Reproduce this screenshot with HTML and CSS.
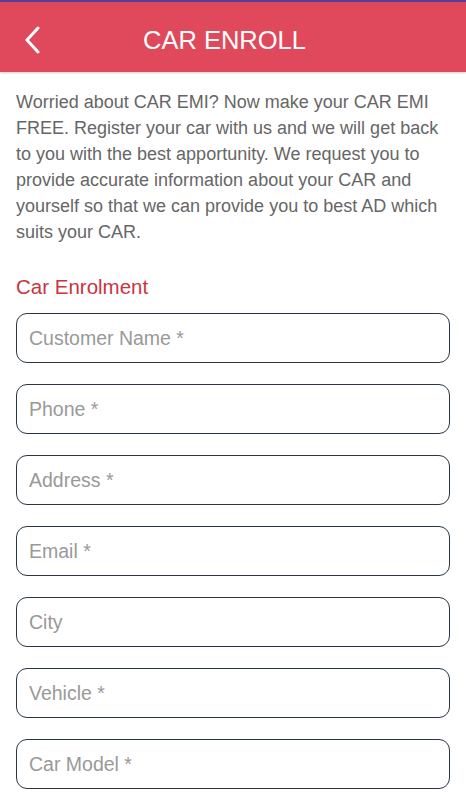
FILE: index.html
```html
<!DOCTYPE html>
<html lang="en">
<head>
    <meta charset="UTF-8">
    <meta name="viewport" content="width=device-width, initial-scale=1.0">
    <title>Car Enroll</title>
    <link rel="stylesheet" href="styles.css">
</head>
<body>

    <div class="topbar">
        <button type="button" class="back" aria-label="Back">
            <svg width="18" height="28" viewBox="0 0 18 28">
                <path d="M15 2 L4 14 L15 26" fill="none" stroke="#fff" stroke-width="3" stroke-linecap="round" stroke-linejoin="round"/>
            </svg>
        </button>
        <h1>CAR ENROLL</h1>
    </div>

    <div class="content">
        <p class="intro">Worried about CAR EMI? Now make your CAR EMI FREE. Register your car with us and we will get back to you with the best apportunity. We request you to provide accurate information about your CAR and yourself so that we can provide you to best AD which suits your CAR.</p>

        <h2>Car Enrolment</h2>

        <form id="carEnrollForm">
            <input type="text" name="customerName" placeholder="Customer Name *">
            <input type="text" name="phone" placeholder="Phone *">
            <input type="text" name="address" placeholder="Address *">
            <input type="text" name="email" placeholder="Email *">
            <input type="text" name="city" placeholder="City">
            <input type="text" name="vehicle" placeholder="Vehicle *">
            <input type="text" name="carModel" placeholder="Car Model *">
        </form>
    </div>

</body>
</html>
```

FILE: styles.css
```css
    body {
        margin: 0;
        font-family: "Liberation Sans", Arial, sans-serif;
        background-color: #fff;
        border-top: 2px solid #5a3d9b;
    }

    .topbar {
        display: flex;
        align-items: center;
        box-sizing: border-box;
        height: 70px;
        padding-top: 6px;
        background-color: #e0495b;
        box-shadow: 0 1px 2px rgba(0, 0, 0, 0.2);
    }

    .back {
        display: flex;
        align-items: center;
        justify-content: center;
        width: 58px;
        height: 40px;
        padding: 0 0 0 6px;
        border: none;
        background: none;
    }

    .topbar h1 {
        flex: 1;
        margin: 0;
        padding-left: 85px;
        color: #fff;
        font-size: 25.5px;
        font-weight: normal;
    }

    .content {
        padding: 17px 16px 0 16px;
    }

    .intro {
        margin: 0;
        color: #666;
        font-size: 18px;
        line-height: 26px;
    }

    h2 {
        margin: 30px 0 14px 0;
        color: #c9343f;
        font-size: 20.5px;
        font-weight: normal;
    }

    #carEnrollForm {
        display: flex;
        flex-direction: column;
        gap: 21px;
    }

    #carEnrollForm input {
        box-sizing: border-box;
        width: 100%;
        height: 50px;
        padding: 0 12px;
        border: 1.5px solid #2a3644;
        border-radius: 11px;
        font-family: "Liberation Sans", Arial, sans-serif;
        font-size: 19.5px;
        color: #333;
        outline: none;
    }

    #carEnrollForm input::placeholder {
        color: #999;
    }
```
